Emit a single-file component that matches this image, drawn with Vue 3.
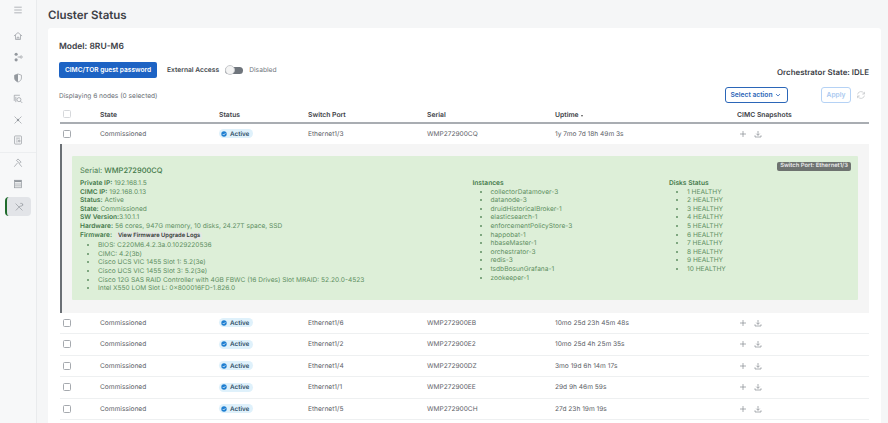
<template>
  <div class="page">
    <aside class="sidebar">
      <button class="burger">
        <svg viewBox="0 0 16 16"><path d="M2 3.500h12M2 8h12M2 12.500h12" /></svg>
      </button>
      <nav class="side-nav">
        <div class="nav-item">
          <svg viewBox="0 0 16 16"><path d="M1.500 8L8 2.500 14.500 8M4 6.500V13.500h8V6.500M6.500 13.500V10h3v3.500" /></svg>
        </div>
        <div class="nav-item">
          <svg viewBox="0 0 16 16">
            <circle class="solid" cx="5" cy="3.500" r="2.500" />
            <circle class="solid" cx="5" cy="12.500" r="2.500" />
            <circle cx="13" cy="8" r="1.800" />
            <path d="M7.500 8h3.500" />
          </svg>
        </div>
        <div class="nav-item">
          <svg viewBox="0 0 16 16">
            <path d="M8 1.500l5.500 2v4.500c0 3.200-2.200 5.200-5.500 6.500-3.300-1.300-5.500-3.300-5.500-6.500V3.500z" />
            <path class="solid" d="M8 1.500v13c-3.300-1.300-5.500-3.300-5.500-6.500V3.500z" />
          </svg>
        </div>
        <div class="nav-item">
          <svg viewBox="0 0 16 16">
            <path d="M2 11V2h9" />
            <path d="M4.500 13V4.500" />
            <circle cx="9.500" cy="9" r="3.200" />
            <path d="M11.800 11.300L14.800 14.300" />
          </svg>
        </div>
        <div class="nav-item">
          <svg viewBox="0 0 16 16">
            <circle class="solid" cx="8" cy="8" r="2" />
            <path d="M2.500 2.500L6 6M13.500 2.500L10 6M2.500 13.500L6 10M13.500 13.500L10 10" />
          </svg>
        </div>
        <div class="nav-item">
          <svg viewBox="0 0 16 16">
            <rect x="2.500" y="1.500" width="11" height="13" rx="1" />
            <path d="M5 5h6M5 8h2.500M5 11h2.500M9 8h2v3H9z" />
          </svg>
        </div>
        <div class="nav-sep"></div>
        <div class="nav-item">
          <svg viewBox="0 0 16 16">
            <path d="M2 14l5.500-6.500M5.500 4L8 1.500l5 5-2 2zM9.500 8.500L14 14" />
          </svg>
        </div>
        <div class="nav-item">
          <svg viewBox="0 0 16 16">
            <rect class="solid" x="2.500" y="2" width="11" height="3" />
            <rect x="2.500" y="2" width="11" height="12" />
            <path d="M2.500 8h11M2.500 11h11" />
          </svg>
        </div>
        <div class="nav-item active">
          <svg viewBox="0 0 16 16">
            <path d="M2.500 2.500L13.500 13.500M13.500 2.500a3 3 0 0 1-4 4L3 13.500" />
            <path d="M10 2.200a3 3 0 0 1 3.800 3.800" />
          </svg>
        </div>
      </nav>
    </aside>

    <main class="content">
      <h1 class="title">Cluster Status</h1>
      <section class="card">
        <h2 class="model">Model: 8RU-M6</h2>

        <div class="toolbar">
          <button class="btn-primary">CIMC/TOR guest password</button>
          <span class="access-label">External Access</span>
          <span class="toggle"><span class="knob"></span></span>
          <span class="access-state">Disabled</span>
          <span class="orch">Orchestrator State: IDLE</span>
        </div>

        <div class="actions">
          <span class="count">Displaying 6 nodes (0 selected)</span>
          <button class="btn-select">
            Select action
            <svg viewBox="0 0 10 10"><path d="M2.500 3.800L5 6.300l2.500-2.500" /></svg>
          </button>
          <button class="btn-apply">Apply</button>
          <svg class="refresh" viewBox="0 0 16 16">
            <path d="M2.500 7a5.500 5.500 0 0 1 10-2l1 1.500M13.500 3v3.500H10M13.500 9a5.500 5.500 0 0 1-10 2l-1-1.500M2.500 13V9.500H6" />
          </svg>
        </div>

        <div class="row head">
          <span class="check-cell"><span class="check faint"></span></span>
          <span>State</span>
          <span>Status</span>
          <span>Switch Port</span>
          <span>Serial</span>
          <span>Uptime <i class="sort"></i></span>
          <span>CIMC Snapshots</span>
        </div>

        <template v-for="(node, i) in nodes" :key="node.serial">
          <div class="row" :class="{ first: i === 0 }">
            <span class="check-cell"><span class="check"></span></span>
            <span>Commissioned</span>
            <span>
              <span class="badge">
                <svg viewBox="0 0 10 10">
                  <circle cx="5" cy="5" r="4.500" fill="#1f7fd1" />
                  <path d="M3 5.200l1.500 1.500L7.200 3.800" fill="none" stroke="#fff" stroke-width="1.200" />
                </svg>
                Active
              </span>
            </span>
            <span>{{ node.port }}</span>
            <span>{{ node.serial }}</span>
            <span>{{ node.uptime }}</span>
            <span class="snap">
              <svg viewBox="0 0 12 12"><path d="M6 1.500v9M1.500 6h9" /></svg>
              <svg viewBox="0 0 12 12"><path d="M6 1.500v6.500M3.500 5.500L6 8l2.500-2.500M1.500 8v2.500h9V8" /></svg>
            </span>
          </div>

          <div v-if="i === 0" class="detail">
            <div class="panel">
              <span class="port-tag">Switch Port: Ethernet1/3</span>
              <div class="panel-main">
                <h3 class="serial">Serial: <b>WMP272900CQ</b></h3>
                <p><b>Private IP:</b> 192.168.1.5</p>
                <p><b>CIMC IP:</b> 192.168.0.13</p>
                <p><b>Status:</b> Active</p>
                <p><b>State:</b> Commissioned</p>
                <p><b>SW Version:</b>3.10.1.1</p>
                <p><b>Hardware:</b> 56 cores, 947G memory, 10 disks, 24.27T space, SSD</p>
                <p><b>Firmware:</b> <span class="logs">View Firmware Upgrade Logs</span></p>
                <ul class="fw-list">
                  <li v-for="f in firmware" :key="f">{{ f }}</li>
                </ul>
              </div>
              <div class="panel-inst">
                <p><b>Instances</b></p>
                <ul>
                  <li v-for="n in instances" :key="n">{{ n }}</li>
                </ul>
              </div>
              <div class="panel-disks">
                <p><b>Disks Status</b></p>
                <ul>
                  <li v-for="d in 10" :key="d">{{ d }} HEALTHY</li>
                </ul>
              </div>
            </div>
          </div>
        </template>
      </section>
    </main>
  </div>
</template>

<script setup>
const nodes = [
  { port: 'Ethernet1/3', serial: 'WMP272900CQ', uptime: '1y 7mo 7d 18h 49m 3s' },
  { port: 'Ethernet1/6', serial: 'WMP272900EB', uptime: '10mo 25d 23h 45m 48s' },
  { port: 'Ethernet1/2', serial: 'WMP272900E2', uptime: '10mo 25d 4h 25m 35s' },
  { port: 'Ethernet1/4', serial: 'WMP272900DZ', uptime: '3mo 19d 6h 14m 17s' },
  { port: 'Ethernet1/1', serial: 'WMP272900EE', uptime: '29d 9h 46m 59s' },
  { port: 'Ethernet1/5', serial: 'WMP272900CH', uptime: '27d 23h 19m 19s' }
]

const firmware = [
  'BIOS: C220M6.4.2.3a.0.1029220536',
  'CIMC: 4.2(3b)',
  'Cisco UCS VIC 1455 Slot 1: 5.2(3e)',
  'Cisco UCS VIC 1455 Slot 3: 5.2(3e)',
  'Cisco 12G SAS RAID Controller with 4GB FBWC (16 Drives) Slot MRAID: 52.20.0-4523',
  'Intel X550 LOM Slot L: 0×800016FD-1.826.0'
]

const instances = [
  'collectorDatamover-3',
  'datanode-3',
  'druidHistoricalBroker-1',
  'elasticsearch-1',
  'enforcementPolicyStore-3',
  'happobat-1',
  'hbaseMaster-1',
  'orchestrator-3',
  'redis-3',
  'tsdbBosunGrafana-1',
  'zookeeper-1'
]
</script>

<style>
html, body { margin: 0; height: 100%; overflow: hidden; background: #f5f6f7; }
</style>

<style scoped>
.page {
  display: flex;
  height: 423px;
  overflow: hidden;
  font-family: Inter, "Liberation Sans", sans-serif;
  font-size: 6.6px;
  color: #5c6167;
  background: #f5f6f7;
  text-rendering: geometricPrecision;
  opacity: 0.999;
}

.sidebar {
  width: 37px;
  flex: none;
  box-sizing: border-box;
  border-right: 1px solid #e9ebed;
  background: #f7f8f9;
}
.sidebar svg {
  width: 10px;
  height: 10px;
  fill: none;
  stroke: #93989e;
  stroke-width: 1.1;
}
.sidebar .solid {
  fill: #93989e;
  stroke: none;
}
.burger {
  display: block;
  width: 100%;
  height: 21px;
  padding: 0;
  border: 0;
  background: none;
  text-align: center;
}
.side-nav {
  display: flex;
  flex-direction: column;
  align-items: center;
  margin-top: 5px;
}
.nav-item {
  width: 26px;
  height: 20.800px;
  display: flex;
  align-items: center;
  justify-content: center;
}
.nav-sep {
  width: 36px;
  height: 1px;
  margin-top: 1px;
  background: #eceef0;
}
.nav-item.active {
  height: 19px;
  margin-top: 3px;
  border-radius: 4px;
  background: #e2e4e8;
  border-left: 2px solid #1f6b2c;
  box-sizing: border-box;
}

.content {
  flex: 1;
  min-width: 0;
  padding: 0 7px 0 11px;
}
.title {
  margin: 0;
  height: 28px;
  line-height: 30px;
  font-size: 11.500px;
  font-weight: 600;
  color: #3c4046;
}
.card {
  background: #fff;
  border-radius: 3px 3px 0 0;
  padding: 14px 12px 0 11px;
  height: 395px;
  box-sizing: border-box;
  overflow: hidden;
}
.model {
  margin: 0;
  height: 11px;
  line-height: 11px;
  font-size: 8.500px;
  font-weight: 600;
  color: #3c4046;
}
.toolbar {
  display: flex;
  align-items: center;
  margin-top: 9px;
  height: 16px;
}
.btn-primary {
  height: 16px;
  width: 98px;
  padding: 0;
  border: 0;
  border-radius: 2px;
  background: #1d63c4;
  color: #fff;
  font: 600 6.600px Inter, sans-serif;
}
.access-label {
  margin-left: 10px;
  font-weight: 600;
  font-size: 6.700px;
  color: #43474d;
}
.toggle {
  position: relative;
  width: 18px;
  height: 7px;
  margin-left: 6px;
  border-radius: 4px;
  background: #6f757c;
}
.knob {
  position: absolute;
  left: 0;
  top: -1.500px;
  width: 10px;
  height: 10px;
  border-radius: 50%;
  background: #f4f4f4;
  border: 1px solid #c8cacd;
  box-sizing: border-box;
}
.access-state {
  margin-left: 6px;
  font-size: 6.700px;
  color: #6f757c;
}
.orch {
  margin-left: auto;
  padding-top: 4px;
  font-size: 7.900px;
  font-weight: 600;
  color: #3c4046;
}
.actions {
  display: flex;
  align-items: center;
  height: 16px;
  margin-top: 9px;
}
.count {
  flex: 1;
  padding-top: 1px;
  color: #6a6f75;
}
.btn-select {
  display: flex;
  align-items: center;
  justify-content: center;
  gap: 2px;
  width: 63px;
  height: 16px;
  padding: 0;
  box-sizing: border-box;
  border: 1px solid #2b66b8;
  border-radius: 3px;
  background: #fff;
  color: #2b66b8;
  font: 600 6.700px Inter, sans-serif;
}
.btn-select svg {
  width: 8px;
  height: 8px;
  fill: none;
  stroke: #2b66b8;
  stroke-width: 1;
}
.btn-apply {
  width: 30px;
  height: 16px;
  margin-left: 33px;
  padding: 0;
  box-sizing: border-box;
  border: 1px solid #b5d2f5;
  border-radius: 3px;
  background: #fff;
  color: #a9c9f0;
  font: 600 6.700px Inter, sans-serif;
}
.refresh {
  width: 10px;
  height: 10px;
  margin: 0 3px 0 5px;
  fill: none;
  stroke: #c4c7ca;
  stroke-width: 1.200;
}

.row {
  display: grid;
  grid-template-columns: 40px 119px 89px 119px 128px 182px 132px;
  align-items: center;
  height: 21.500px;
  margin-left: 1px;
  border-bottom: 1px solid #eef0f1;
  box-sizing: border-box;
}
.head {
  height: 18px;
  margin-top: 3px;
  border-bottom: 2px solid #a9adb2;
  font-size: 6.800px;
  font-weight: 600;
  color: #3c4046;
}
.row.first {
  height: 20px;
  border-bottom: 0;
}
.check-cell {
  display: flex;
  padding-left: 3px;
}
.check {
  width: 6px;
  height: 6px;
  border: 1px solid #a5a9ae;
  border-radius: 1.500px;
  background: #fff;
}
.check.faint { border-color: #d6d8db; }
.sort {
  display: inline-block;
  margin-left: 1px;
  border: 1.500px solid transparent;
  border-top: 2px solid #555;
  vertical-align: -1px;
}
.badge {
  display: inline-flex;
  align-items: center;
  gap: 3px;
  height: 9px;
  padding: 0 4px 0 2px;
  border-radius: 5px;
  background: #dff1fb;
  color: #2f4f66;
  font-size: 6.300px;
  font-weight: 600;
}
.badge svg { width: 6px; height: 6px; }
.snap {
  display: flex;
  gap: 7px;
  padding-left: 2px;
}
.snap svg {
  width: 8px;
  height: 8px;
  fill: none;
  stroke: #80858b;
  stroke-width: 1;
}

.detail {
  margin-left: 1px;
  padding: 12px 11px 12px 10px;
  background: #f5f5f5;
  border-left: 2px solid #6b7075;
  height: 168.500px;
  box-sizing: border-box;
}
.panel {
  position: relative;
  display: grid;
  grid-template-columns: 392.500px 196.500px 1fr;
  height: 144px;
  box-sizing: border-box;
  padding: 9px 8px 0;
  border-radius: 1px;
  background: #ddefd8;
  color: #5f8f63;
  line-height: 8.600px;
  font-size: 6.600px;
}
.panel p { margin: 0; }
.panel b {
  color: #427848;
  font-weight: 600;
}
.panel ul {
  margin: 0;
  padding-left: 18px;
}
.panel .fw-list { margin-top: 1px; }
.serial {
  margin: 0 0 3px;
  height: 11px;
  line-height: 11px;
  font-size: 7.500px;
  font-weight: 400;
  color: #4b7c50;
}
.serial b { font-weight: 500; color: #427848; }
.logs {
  display: inline-block;
  margin-left: 2px;
  padding: 0 2px;
  border-radius: 2px;
  background: #e3e8e2;
  color: #333a35;
  font-size: 5.800px;
  font-weight: 600;
}
.panel-inst, .panel-disks { padding-top: 14px; }
.port-tag {
  position: absolute;
  top: 6px;
  right: 7px;
  padding: 0 3px;
  border-radius: 2px;
  background: #6e7370;
  color: #e8e8e8;
  font-size: 5.800px;
  font-weight: 600;
}
</style>
